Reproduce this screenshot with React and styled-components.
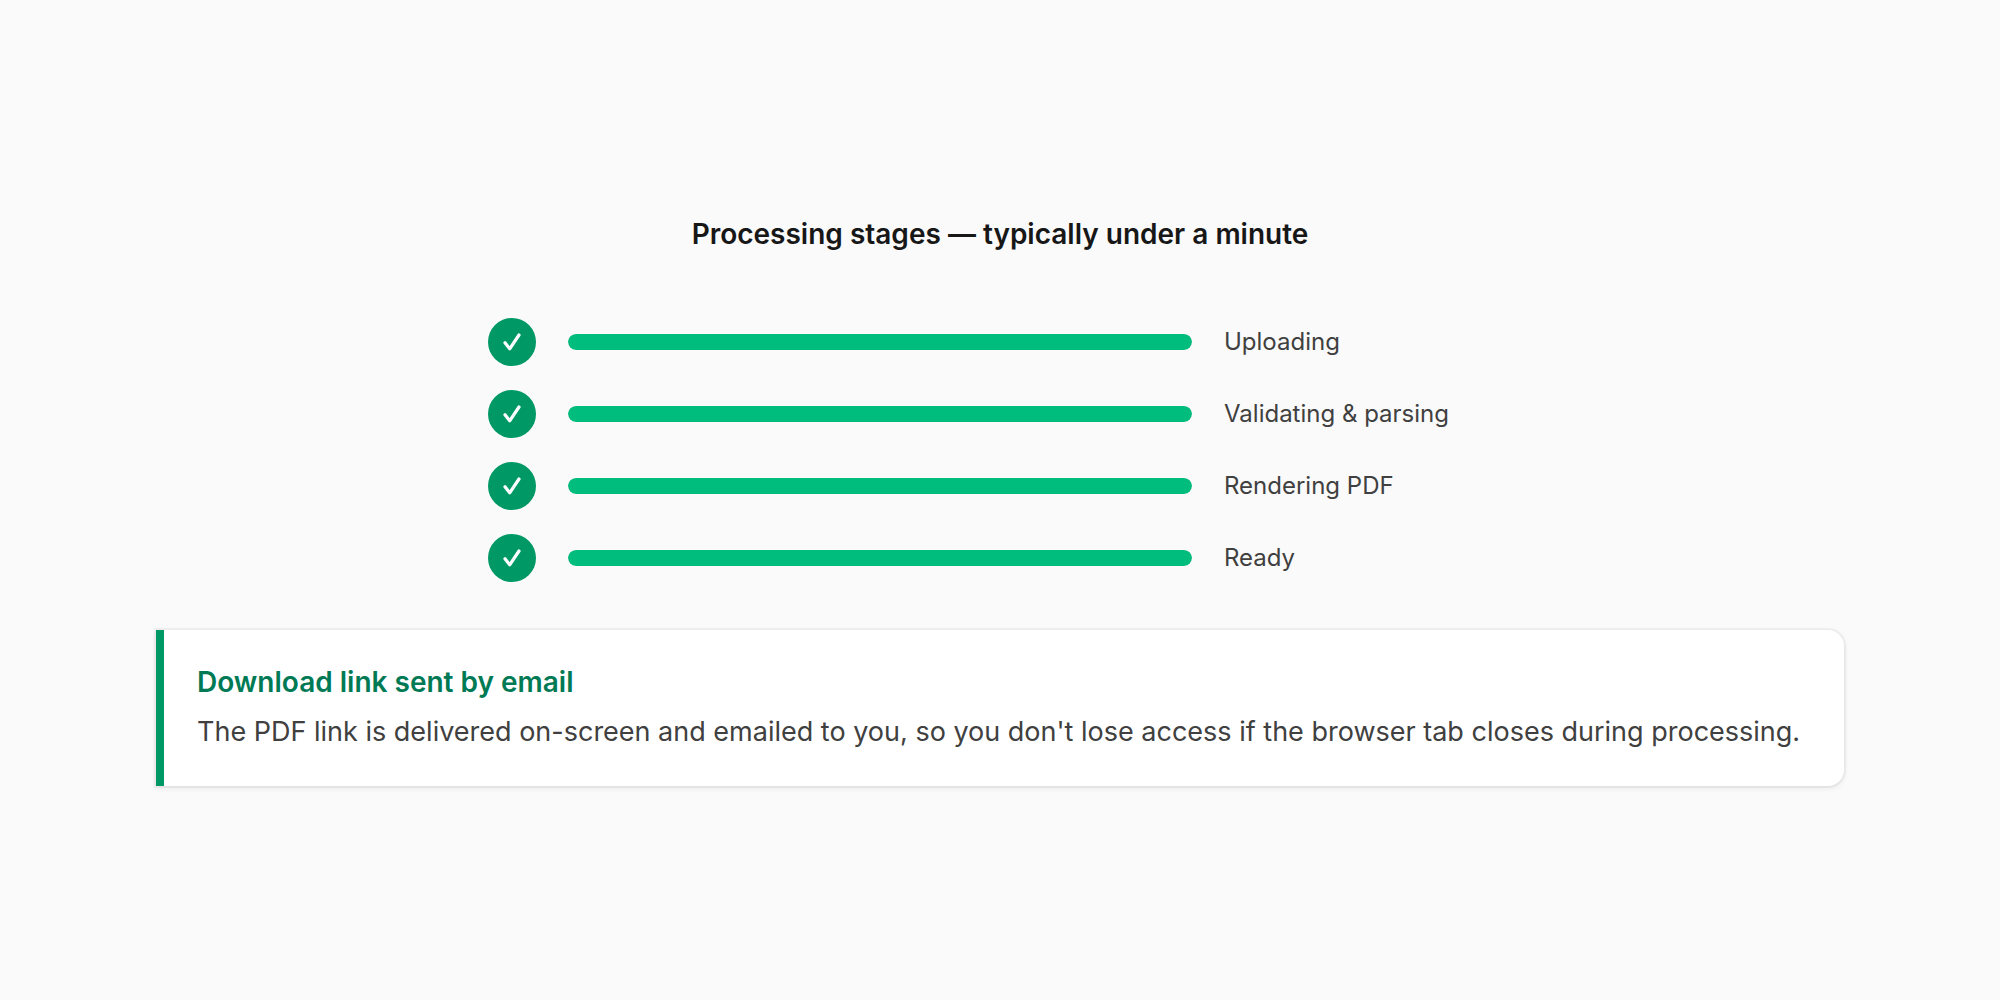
import React from "react";
import styled, { createGlobalStyle } from "styled-components";

const GlobalStyle = createGlobalStyle`
  * {
    box-sizing: border-box;
  }

  body {
    margin: 0;
    background: #fafafa;
    font-family: Inter, "Liberation Sans", sans-serif;
  }
`;

const Page = styled.main`
  display: flex;
  flex-direction: column;
  align-items: center;
  justify-content: center;
  min-height: 100vh;
  padding: 32px;
`;

const Title = styled.h2`
  margin: 0 0 64px;
  font-size: 28px;
  line-height: 40px;
  font-weight: 600;
  color: #171717;
`;

const StageList = styled.ul`
  display: flex;
  flex-direction: column;
  gap: 24px;
  width: 100%;
  max-width: 1024px;
  margin: 0 0 48px;
  padding: 0;
  list-style: none;
`;

const Stage = styled.li`
  display: flex;
  align-items: center;
  gap: 32px;
`;

const StageIcon = styled.span`
  display: flex;
  flex: none;
  align-items: center;
  justify-content: center;
  width: 48px;
  height: 48px;
  border-radius: 50%;
  background: #009966;
`;

const Track = styled.div`
  flex: 1;
  height: 16px;
  border-radius: 8px;
  overflow: hidden;
  background: #e5e5e5;
`;

const Fill = styled.div`
  height: 100%;
  border-radius: 8px;
  background: #00bc7d;
`;

const StageLabel = styled.span`
  flex: none;
  width: 288px;
  font-size: 24px;
  line-height: 32px;
  color: #404040;
`;

const Notice = styled.section`
  width: 100%;
  max-width: 1688px;
  padding: 32px 33px;
  border-left: 8px solid #009966;
  border-radius: 0 16px 16px 0;
  background: #ffffff;
  box-shadow: 0 0 0 2px rgba(0, 0, 0, 0.04), 0 2px 6px rgba(0, 0, 0, 0.08);
`;

const NoticeTitle = styled.h3`
  margin: 0 0 8px;
  font-size: 28px;
  line-height: 40px;
  font-weight: 600;
  color: #007a55;
`;

const NoticeText = styled.p`
  margin: 0;
  font-size: 27px;
  line-height: 44px;
  color: #404040;
`;

const stages = [
  { label: "Uploading", progress: 100 },
  { label: "Validating & parsing", progress: 100 },
  { label: "Rendering PDF", progress: 100 },
  { label: "Ready", progress: 100 },
];

const CheckIcon = () => (
  <svg width="24" height="24" viewBox="0 0 24 24" fill="none" aria-hidden="true">
    <path
      d="M5 12.8L9.7 18.8L19 5"
      stroke="#fff"
      strokeWidth="3.2"
      strokeLinecap="round"
      strokeLinejoin="round"
    />
  </svg>
);

const App = () => {
  return (
    <Page>
      <GlobalStyle />
      <Title>Processing stages — typically under a minute</Title>
      <StageList>
        {stages.map((stage) => (
          <Stage key={stage.label}>
            <StageIcon>
              <CheckIcon />
            </StageIcon>
            <Track>
              <Fill style={{ width: `${stage.progress}%` }} />
            </Track>
            <StageLabel>{stage.label}</StageLabel>
          </Stage>
        ))}
      </StageList>
      <Notice>
        <NoticeTitle>Download link sent by email</NoticeTitle>
        <NoticeText>
          The PDF link is delivered on-screen and emailed to you, so you don't
          lose access if the browser tab closes during processing.
        </NoticeText>
      </Notice>
    </Page>
  );
};

export default App;
